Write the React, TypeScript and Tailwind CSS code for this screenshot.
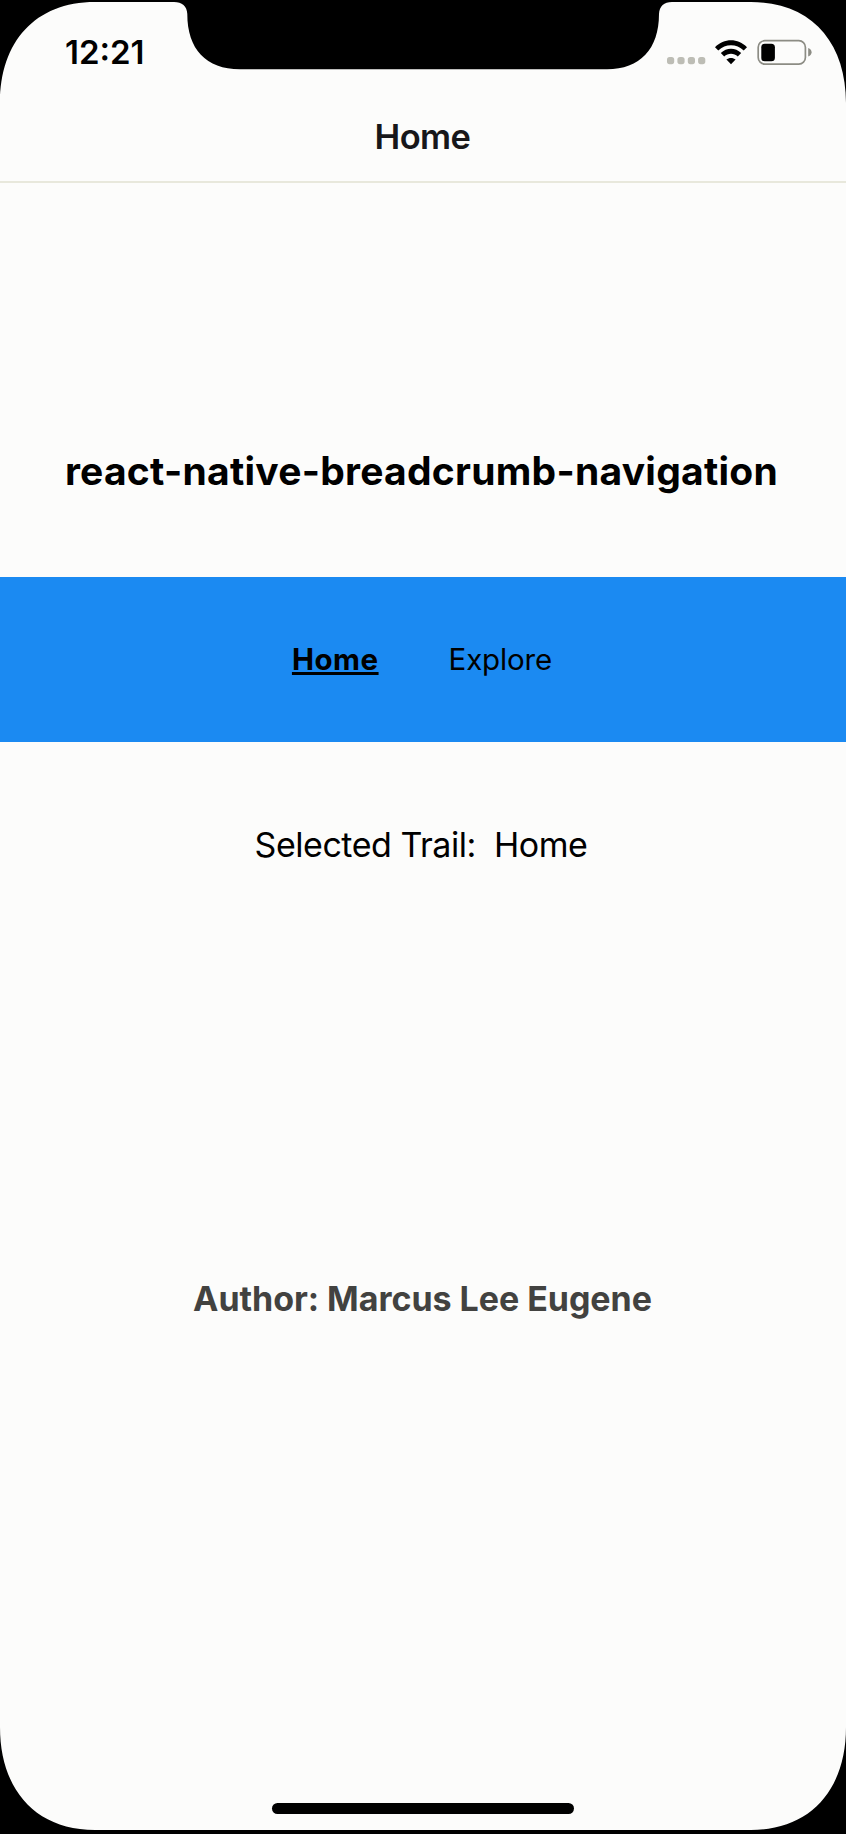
import React from "react";

function StatusIcons() {
  return (
    <svg width="146" height="30" viewBox="666 37 146 30" fill="none" aria-hidden="true">
      <g fill="#bdbdb5">
        <rect x="667" y="57" width="7.2" height="7.2" rx="2.6" />
        <rect x="677.4" y="57" width="7.2" height="7.2" rx="2.6" />
        <rect x="687.8" y="57" width="7.2" height="7.2" rx="2.6" />
        <rect x="698.1" y="57" width="7.2" height="7.2" rx="2.6" />
      </g>
      <g fill="#000">
        <path d="M715 47.2 C724 37.9 738 37.9 747 47.2 L743.7 50.6 C736.6 43.6 725.4 43.6 718.3 50.6 Z" />
        <path d="M720.8 53 C726.5 47.3 735.5 47.3 741.2 53 L737.8 56.4 C734 52.7 728 52.7 724.2 56.4 Z" />
        <path d="M726.4 59.6 C728.8 57.3 733.2 57.3 735.6 59.6 L731 64.2 Z" />
      </g>
      <rect x="758.2" y="40.7" width="47.2" height="23.4" rx="6.6" stroke="#8c8c84" strokeWidth="1.7" />
      <rect x="761.3" y="43.7" width="13.6" height="17.6" rx="3.6" fill="#000" />
      <path d="M808.2 48 Q811.6 49.4 811.6 52.2 T808.2 56.6 Z" fill="#8c8c84" />
    </svg>
  );
}

function DeviceFrame() {
  return (
    <svg
      className="pointer-events-none absolute inset-0"
      width="846"
      height="1834"
      viewBox="0 0 846 1834"
      aria-hidden="true"
    >
      <path
        fill="#000"
        fillRule="evenodd"
        d="M0 0H846V1834H0Z M0 103C0 42 35 2 95 2H174C182 2 187 6 187.3 14C187.3 49 206 69.3 240 69.3H607C640 69.3 659 49 659 14C659.5 6 664 2 672 2H751C811 2 846 42 846 103V1727C846 1789 811 1830 751 1830H95C35 1830 0 1789 0 1727Z"
      />
    </svg>
  );
}

export default function App() {
  return (
    <div className="relative flex h-[1834px] w-[846px] flex-col overflow-hidden bg-[#fcfcfb] font-['Inter',sans-serif] text-black">
      <header className="flex h-[183px] flex-col border-b-2 border-[#e8e8dc]">
        <div className="flex h-[104px] items-start justify-between pt-[37px] pr-[34px] pl-[65px]">
          <time className="text-[33px] leading-[31px] font-semibold">12:21</time>
          <StatusIcons />
        </div>
        <h1 className="pr-[1px] text-center text-[34.5px] leading-[66px] font-semibold tracking-[-0.6px] text-[#17171a]">Home</h1>
      </header>

      <main className="flex flex-col">
        <h2 className="mt-[258px] pr-[3px] text-center text-[39px] leading-[60px] font-bold tracking-[0.26px] whitespace-nowrap">
          react-native-breadcrumb-navigation
        </h2>
        <nav className="mt-[76px] flex h-[165px] items-center justify-center gap-[70px] bg-[#1b8af2] pr-[2px] pb-[2px] text-[29.5px] leading-[40px]">
          <a className="font-bold tracking-[0.5px] underline decoration-[2.5px] underline-offset-[2px]">Home</a>
          <a className="tracking-[-0.15px]">Explore</a>
        </nav>
        <p className="mt-[83px] pr-[4px] text-center text-[34px] leading-[40px] tracking-[-0.47px] whitespace-pre">{"Selected Trail:  Home"}</p>
        <p className="mt-[414px] pr-[1px] text-center text-[34px] leading-[40px] font-bold tracking-[-0.04px] text-[#424240]">
          Author: Marcus Lee Eugene
        </p>
      </main>

      <div className="mt-auto mb-[20px] h-[11px] w-[302px] self-center rounded-full bg-black" />
      <DeviceFrame />
    </div>
  );
}
